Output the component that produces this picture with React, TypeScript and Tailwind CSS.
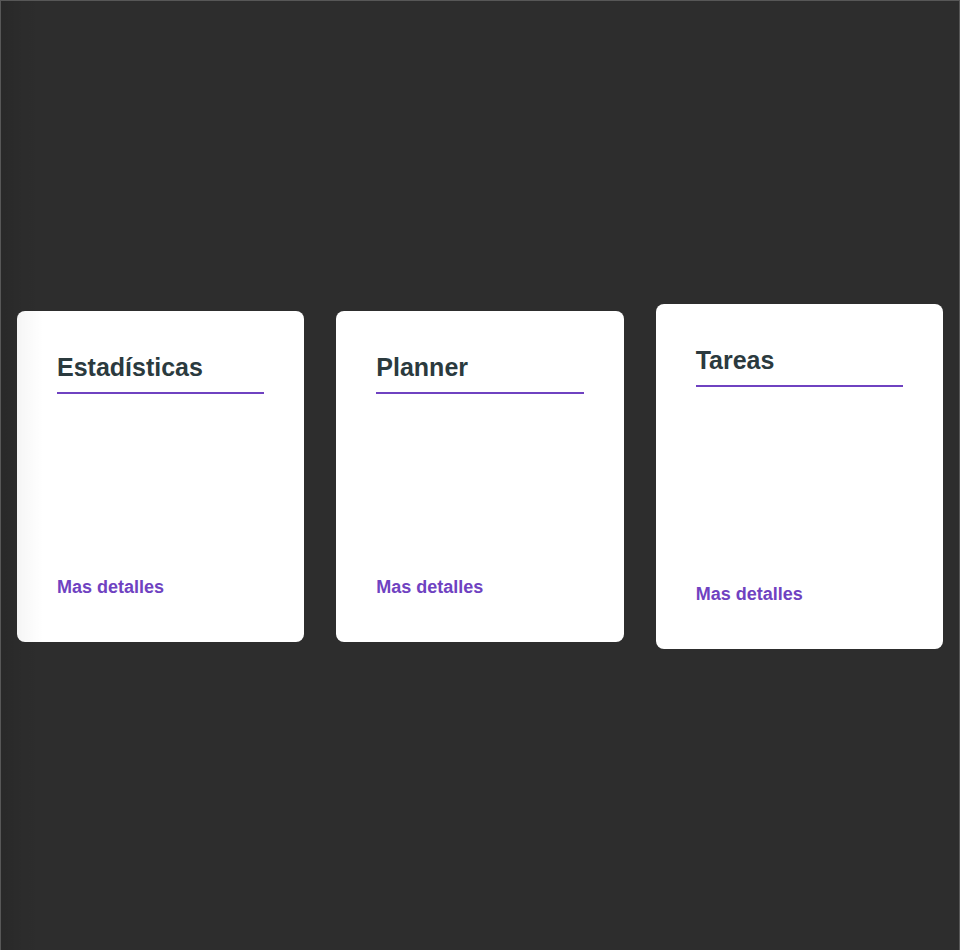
const cards = [
  { title: "Estadísticas", tall: false },
  { title: "Planner", tall: false },
  { title: "Tareas", tall: true },
];

function Card({ title, tall }: { title: string; tall: boolean }) {
  return (
    <div
      className={`flex-1 flex flex-col justify-between rounded-lg bg-white px-10 pt-[41px] pb-[41px] ${
        tall ? "h-[345px]" : "h-[331px]"
      }`}
    >
      <h2 className="border-b-2 border-[#6f42c1] pb-[10px] text-[25px] leading-[30px] font-bold text-[#2b3a3e]">
        {title}
      </h2>
      <a href="#" className="text-[18px] leading-[27px] font-bold text-[#6f42c1]">
        Mas detalles
      </a>
    </div>
  );
}

export default function App() {
  return (
    <div
      className="relative h-[950px] overflow-hidden border-x border-t border-[#575757] bg-[#2d2d2d] pt-[2px]"
      style={{ fontFamily: '"Liberation Sans", Arial, sans-serif' }}
    >
      {/* soft shade along the left edge, lies over the first card */}
      <div className="pointer-events-none absolute inset-y-0 left-0 z-10 w-[42px] bg-gradient-to-r from-black/10 via-black/[0.03] to-transparent" />
      <div className="flex h-full items-center gap-8 px-4">
        {cards.map((c) => (
          <Card key={c.title} title={c.title} tall={c.tall} />
        ))}
      </div>
    </div>
  );
}
